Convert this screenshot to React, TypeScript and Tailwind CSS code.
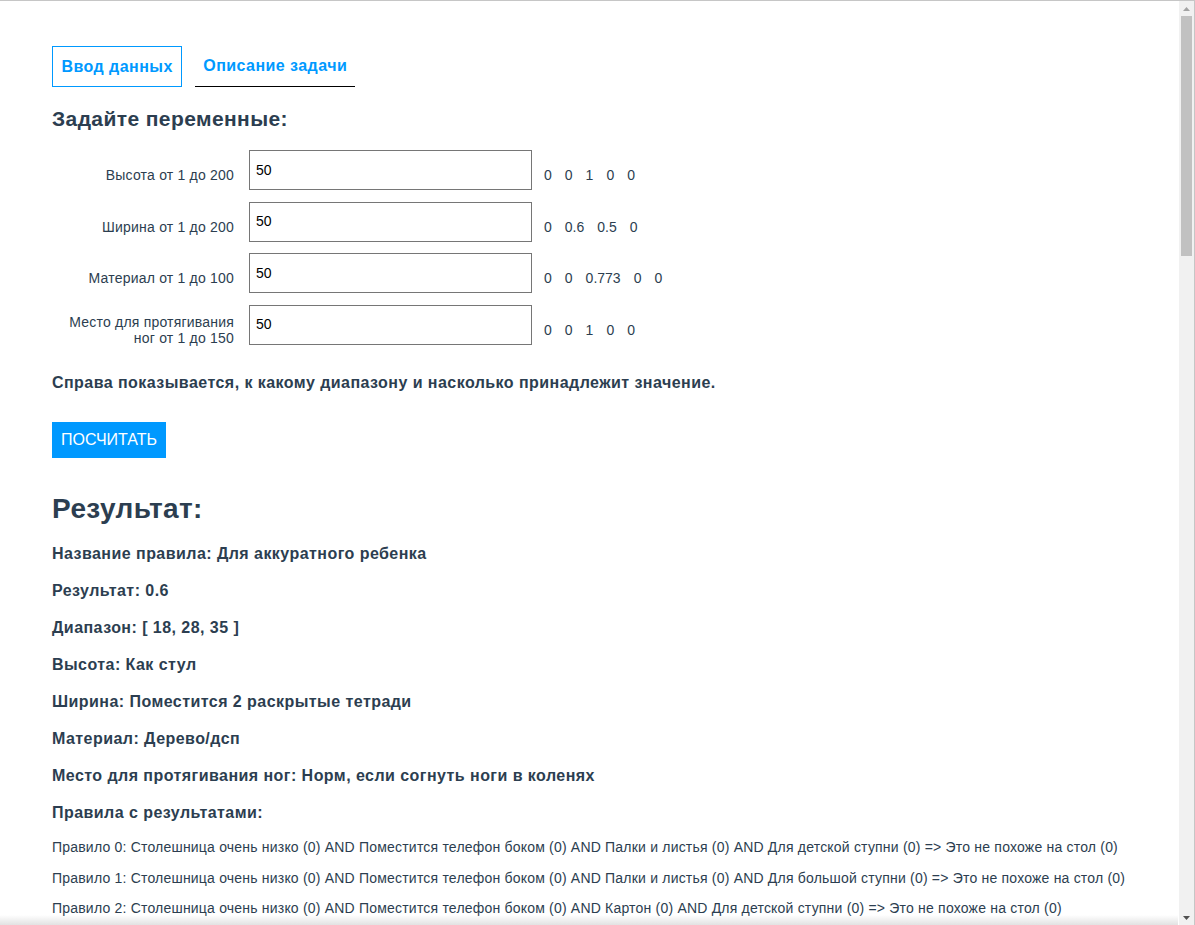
import React from 'react'

const FONT = "font-['Liberation_Sans',Arial,Helvetica,sans-serif]"

const variables = [
  { label: 'Высота от 1 до 200', value: '50', degrees: ['0', '0', '1', '0', '0'] },
  { label: 'Ширина от 1 до 200', value: '50', degrees: ['0', '0.6', '0.5', '0'] },
  { label: 'Материал от 1 до 100', value: '50', degrees: ['0', '0', '0.773', '0', '0'] },
  { label: 'Место для протягивания ног от 1 до 150', value: '50', degrees: ['0', '0', '1', '0', '0'] },
]

const summary = [
  'Название правила: Для аккуратного ребенка',
  'Результат: 0.6',
  'Диапазон: [ 18, 28, 35 ]',
  'Высота: Как стул',
  'Ширина: Поместится 2 раскрытые тетради',
  'Материал: Дерево/дсп',
  'Место для протягивания ног: Норм, если согнуть ноги в коленях',
  'Правила с результатами:',
]

// terms used to build the rule list (legs change fastest)
const heights = [
  'Столешница очень низко',
  'Низко',
  'Как журнальный столик',
  'Как стул',
  'Как обычный стол',
  'Высоко',
  'Очень высоко',
]
const widths = ['Поместится телефон боком', 'Поместится 2 раскрытые тетради']
const materials = ['Палки и листья', 'Картон', 'Дерево/дсп']
const legs = ['Для детской ступни', 'Для большой ступни']

const degreeOf: Record<string, number> = {
  'Как стул': 1,
  'Поместится 2 раскрытые тетради': 0.6,
  'Дерево/дсп': 0.773,
}

function buildRules() {
  const rules: string[] = []
  let i = 0
  for (const h of heights)
    for (const w of widths)
      for (const m of materials)
        for (const l of legs) {
          const parts = [h, w, m, l].map((t) => ({ t, d: degreeOf[t] ?? 0 }))
          const res = Math.min(...parts.map((p) => p.d))
          const name = res > 0 ? 'Для аккуратного ребенка' : 'Это не похоже на стол'
          rules.push(
            `Правило ${i}: ` +
              parts.map((p) => `${p.t} (${p.d})`).join(' AND ') +
              ` => ${name} (${res})`
          )
          i++
        }
  return rules
}

const rules = buildRules()

function Scrollbar() {
  return (
    <div className="flex w-[15px] shrink-0 flex-col bg-[#f1f1f1]">
      <div className="flex h-[15px] items-center justify-center">
        <svg width="7" height="4" viewBox="0 0 7 4">
          <path d="M0 4 L3.5 0 L7 4 Z" fill="#a3a3a3" />
        </svg>
      </div>
      <div className="mx-[2px] h-[240px] bg-[#c1c1c1]" />
      <div className="flex-1" />
      <div className="flex h-[15px] items-center justify-center">
        <svg width="7" height="4" viewBox="0 0 7 4">
          <path d="M0 0 L7 0 L3.5 4 Z" fill="#505050" />
        </svg>
      </div>
    </div>
  )
}

export default function App() {
  return (
    <div className={`${FONT} relative flex h-[925px] w-[1195px] border-t border-r border-[#c6c6c6] bg-white text-[#2c3e50]`}>
      <div className="min-w-0 flex-1 overflow-hidden">
        <div className="pl-[52px] pt-[45px] pb-[20px]">
          {/* Tabs */}
          <div className="flex gap-[13px] tracking-[0.45px]">
            <div className="flex h-[41px] items-center border border-[#0099ff] px-[8.5px] text-[16px] font-bold text-[#0099ff]">
              Ввод данных
            </div>
            <div className="flex h-[41px] items-center border-b border-black px-[8px] text-[16px] font-bold text-[#0099ff]">
              Описание задачи
            </div>
          </div>

          <h2 className="mt-[20px] text-[21px] leading-[23px] font-bold tracking-[0.4px]">Задайте переменные:</h2>

          {/* Inputs */}
          <div className="mt-[20px] flex flex-col gap-[11.5px]">
            {variables.map((v) => (
              <div key={v.label} className="flex h-[40px] items-center">
                <div className="w-[182px] pt-[10px] text-right text-[14px] leading-[16px] tracking-[0.2px]">{v.label}</div>
                <div className="ml-[15px] flex h-[40px] w-[283px] items-center border border-[#767676] pl-[6px] text-[14px] text-black">
                  {v.value}
                </div>
                <div className="ml-[12px] flex gap-[13px] pt-[10px] text-[14px] leading-[16px]">
                  {v.degrees.map((d, i) => (
                    <span key={i}>{d}</span>
                  ))}
                </div>
              </div>
            ))}
          </div>

          <p className="mt-[29px] text-[16px] leading-[18px] font-bold tracking-[0.45px]">
            Справа показывается, к какому диапазону и насколько принадлежит значение.
          </p>

          <button className="mt-[30.5px] flex h-[36px] w-[114px] items-center justify-center bg-[#0099ff] text-[16px] text-white">
            ПОСЧИТАТЬ
          </button>

          <h1 className="mt-[34.5px] text-[28px] leading-[32px] font-bold tracking-[0.4px]">Результат:</h1>

          <div className="mt-[18px] flex flex-col gap-[16px]">
            {summary.map((s) => (
              <div key={s} className="text-[16px] leading-[21px] font-bold tracking-[0.45px]">
                {s}
              </div>
            ))}
          </div>

          <div className="mt-[16.5px] flex flex-col gap-[14.5px]">
            {rules.map((r) => (
              <div key={r} className="text-[14px] leading-[16px] tracking-[0.2px] whitespace-nowrap">
                {r}
              </div>
            ))}
          </div>
        </div>
      </div>
      <Scrollbar />
      {/* faint shade along the lower edge */}
      <div className="pointer-events-none absolute right-[16px] bottom-0 left-0 h-[10px] bg-gradient-to-b from-white/0 to-[#e2e2e2]" />
    </div>
  )
}
